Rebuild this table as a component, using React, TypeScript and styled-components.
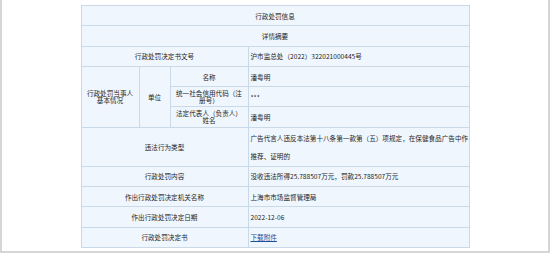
import React from "react";
import styled, { createGlobalStyle } from "styled-components";

const GlobalStyle = createGlobalStyle`
  html, body {
    margin: 0;
    padding: 0;
    background: #ffffff;
  }
  body {
    font-family: "Noto Sans CJK SC", "Liberation Sans", sans-serif;
  }
`;

const Frame = styled.div`
  box-sizing: border-box;
  width: 550px;
  height: 253px;
  border: 2px solid #d6d6d6;
  border-top: none;
  padding-top: 5px;
  display: flex;
  justify-content: center;
  align-items: flex-start;
`;

const Table = styled.table`
  width: 388px;
  table-layout: fixed;
  border-collapse: collapse;
  background: #eff6fd;
  font-size: 6.6px;
  color: #1f1f1f;
`;

const Row = styled.tr<{ $tall?: boolean }>`
  height: ${(p) => (p.$tall ? "39px" : "20.3px")};
`;

const Cell = styled.td<{ $left?: boolean; $tight?: boolean }>`
  border: 1px solid #c9d9e7;
  padding: ${(p) => (p.$left ? "0 0 0 2px" : "0 3px")};
  text-align: ${(p) => (p.$left ? "left" : "center")};
  vertical-align: middle;
  line-height: ${(p) => (p.$tight ? "7px" : "18px")};
  word-break: break-all;
  overflow: hidden;
`;

const Link = styled.a`
  color: #1d4f9c;
  text-decoration: underline;
`;

const rows: [string, React.ReactNode][] = [
  ["行政处罚决定书文号", "沪市监总处（2022）322021000445号"],
];

const tailRows: [string, React.ReactNode][] = [
  ["行政处罚内容", "没收违法所得25.788507万元，罚款25.788507万元"],
  ["作出行政处罚决定机关名称", "上海市市场监督管理局"],
  ["作出行政处罚决定日期", "2022-12-06"],
  ["行政处罚决定书", <Link href="#">下载附件</Link>],
];

export default function App() {
  return (
    <>
      <GlobalStyle />
      <Frame>
        <Table>
          <colgroup>
            <col style={{ width: 58 }} />
            <col style={{ width: 31 }} />
            <col style={{ width: 78 }} />
            <col style={{ width: 221 }} />
          </colgroup>
          <tbody>
            <Row>
              <Cell colSpan={4}>行政处罚信息</Cell>
            </Row>
            <Row>
              <Cell colSpan={4}>详情摘要</Cell>
            </Row>
            {rows.map(([label, value]) => (
              <Row key={label}>
                <Cell colSpan={3}>{label}</Cell>
                <Cell $left>{value}</Cell>
              </Row>
            ))}
            <Row>
              <Cell rowSpan={3} $tight>
                行政处罚当事人基本情况
              </Cell>
              <Cell rowSpan={3}>单位</Cell>
              <Cell>名称</Cell>
              <Cell $left>潘粤明</Cell>
            </Row>
            <Row>
              <Cell $tight>统一社会信用代码（注册号）</Cell>
              <Cell $left>***</Cell>
            </Row>
            <Row>
              <Cell $tight>法定代表人（负责人）姓名</Cell>
              <Cell $left>潘粤明</Cell>
            </Row>
            <Row $tall>
              <Cell colSpan={3}>违法行为类型</Cell>
              <Cell $left>
                广告代言人违反本法第十八条第一款第（五）项规定，在保健食品广告中作推荐、证明的
              </Cell>
            </Row>
            {tailRows.map(([label, value]) => (
              <Row key={label}>
                <Cell colSpan={3}>{label}</Cell>
                <Cell $left>{value}</Cell>
              </Row>
            ))}
          </tbody>
        </Table>
      </Frame>
    </>
  );
}
